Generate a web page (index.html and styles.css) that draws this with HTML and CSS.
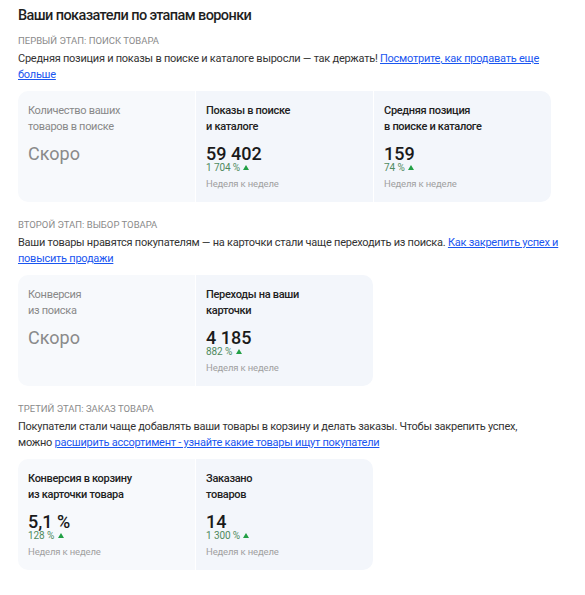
FILE: index.html
```html
<!DOCTYPE html>
<html lang="ru">
<head>
<meta charset="utf-8">
<link rel="stylesheet" href="styles.css">
</head>
<body>
<div class="page">
  <h1 class="title">Ваши показатели по этапам воронки</h1>

  <section class="stage">
    <div class="stage-label">Первый этап: поиск товара</div>
    <p class="stage-text">Средняя позиция и показы в поиске и каталоге выросли — так держать! <a href="#">Посмотрите, как продавать еще больше</a></p>
    <div class="card">
      <div class="cell cell-a">
        <div class="cell-label muted">Количество ваших<br>товаров в поиске</div>
        <div class="cell-value soon">Скоро</div>
      </div>
      <div class="cell cell-b">
        <div class="cell-label">Показы в поиске<br>и каталоге</div>
        <div class="cell-value">59 402</div>
        <div class="change">1 704 % <span class="tri"></span></div>
        <div class="period">Неделя к неделе</div>
      </div>
      <div class="cell cell-b">
        <div class="cell-label">Средняя позиция<br>в поиске и каталоге</div>
        <div class="cell-value">159</div>
        <div class="change">74 % <span class="tri"></span></div>
        <div class="period">Неделя к неделе</div>
      </div>
    </div>
  </section>

  <section class="stage">
    <div class="stage-label">Второй этап: выбор товара</div>
    <p class="stage-text">Ваши товары нравятся покупателям — на карточки стали чаще переходить из поиска. <a href="#">Как закрепить успех и повысить продажи</a></p>
    <div class="card card-2">
      <div class="cell cell-a">
        <div class="cell-label muted">Конверсия<br>из поиска</div>
        <div class="cell-value soon">Скоро</div>
      </div>
      <div class="cell cell-b">
        <div class="cell-label">Переходы на ваши<br>карточки</div>
        <div class="cell-value">4 185</div>
        <div class="change">882 % <span class="tri"></span></div>
        <div class="period">Неделя к неделе</div>
      </div>
    </div>
  </section>

  <section class="stage">
    <div class="stage-label">Третий этап: заказ товара</div>
    <p class="stage-text">Покупатели стали чаще добавлять ваши товары в корзину и делать заказы. Чтобы закрепить успех, можно&nbsp;<a href="#">расширить ассортимент - узнайте какие товары ищут покупатели</a></p>
    <div class="card card-2">
      <div class="cell cell-a">
        <div class="cell-label">Конверсия в корзину<br>из карточки товара</div>
        <div class="cell-value">5,1 %</div>
        <div class="change">128 % <span class="tri"></span></div>
        <div class="period">Неделя к неделе</div>
      </div>
      <div class="cell cell-b">
        <div class="cell-label">Заказано<br>товаров</div>
        <div class="cell-value">14</div>
        <div class="change">1 300 % <span class="tri"></span></div>
        <div class="period">Неделя к неделе</div>
      </div>
    </div>
  </section>
</div>
</body>
</html>
```

FILE: styles.css
```css
* { box-sizing: border-box; }
html, body { margin: 0; padding: 0; background: #fff; }
body {
  font-family: Roboto, "Liberation Sans", Arial, sans-serif;
  color: #333;
}
.page {
  width: 585px;
  padding: 6px 24px 0 18px;
}
.title {
  margin: 0;
  font-size: 14.5px;
  line-height: 20px;
  font-weight: 500;
  letter-spacing: -0.6px;
  color: #1f1f1f;
}
.stage { margin-top: 16px; }
.stage:first-of-type { margin-top: 8px; }
.stage-label {
  font-size: 9.5px;
  line-height: 14px;
  text-transform: uppercase;
  color: #8a8a8a;
}
.stage-text {
  margin: 3px 0 0;
  font-size: 11px;
  line-height: 16px;
  letter-spacing: -0.25px;
  color: #333;
}
.stage-text a { color: #1a56f0; text-decoration: underline; }
.card {
  margin-top: 8px;
  width: 533px;
  display: grid;
  grid-template-columns: repeat(3, 1fr);
  gap: 1px;
  background: #fff;
  border-radius: 10px;
  overflow: hidden;
}
.card-2 {
  width: 355px;
  grid-template-columns: repeat(2, 1fr);
}
.cell {
  padding: 12px 10px 10px 10px;
  min-height: 111px;
}
.cell-a { background: #f7f9fc; }
.cell-b { background: #f3f6fb; }
.cell-label {
  font-size: 11px;
  line-height: 16px;
  font-weight: 500;
  letter-spacing: -0.3px;
  color: #222;
}
.cell-label.muted { font-weight: 400; color: #888; }
.cell-value {
  margin-top: 10px;
  font-size: 18px;
  line-height: 18px;
  font-weight: 500;
  color: #1a1a1a;
}
.cell-value.soon { font-weight: 400; color: #8a8a8a; }
.change {
  font-size: 10px;
  line-height: 10px;
  letter-spacing: -0.1px;
  color: #4f8a5e;
}
.tri {
  display: inline-block;
  width: 0; height: 0;
  border-left: 3px solid transparent;
  border-right: 3px solid transparent;
  border-bottom: 5px solid #22a045;
  margin-left: 1px;
  vertical-align: 1px;
}
.period {
  margin-top: 4px;
  font-size: 9.5px;
  line-height: 14px;
  letter-spacing: -0.15px;
  color: #a0a0a0;
}
```
